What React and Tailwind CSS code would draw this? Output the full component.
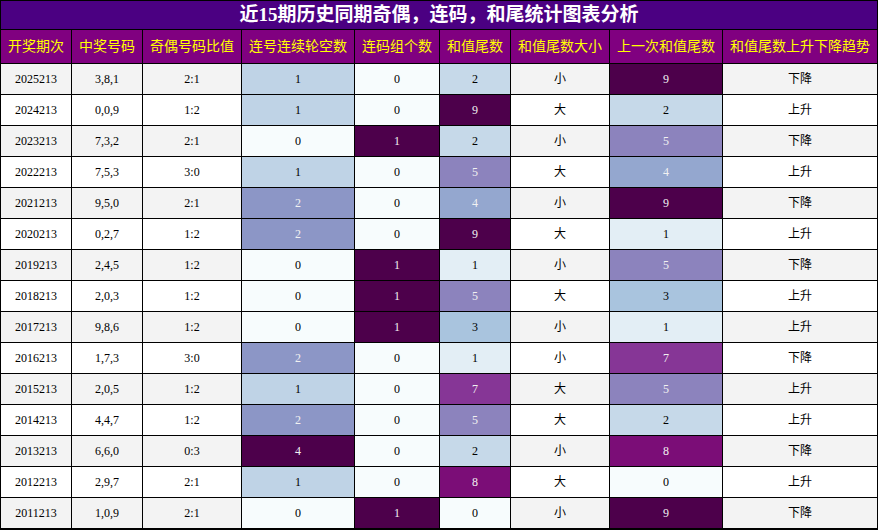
import React from 'react';

const rows = [
  ['2025213', '3,8,1', '2:1', 1, 0, 2, '小', 9, '下降'],
  ['2024213', '0,0,9', '1:2', 1, 0, 9, '大', 2, '上升'],
  ['2023213', '7,3,2', '2:1', 0, 1, 2, '小', 5, '下降'],
  ['2022213', '7,5,3', '3:0', 1, 0, 5, '大', 4, '上升'],
  ['2021213', '9,5,0', '2:1', 2, 0, 4, '小', 9, '下降'],
  ['2020213', '0,2,7', '1:2', 2, 0, 9, '大', 1, '上升'],
  ['2019213', '2,4,5', '1:2', 0, 1, 1, '小', 5, '下降'],
  ['2018213', '2,0,3', '1:2', 0, 1, 5, '大', 3, '上升'],
  ['2017213', '9,8,6', '1:2', 0, 1, 3, '小', 1, '上升'],
  ['2016213', '1,7,3', '3:0', 2, 0, 1, '小', 7, '下降'],
  ['2015213', '2,0,5', '1:2', 1, 0, 7, '大', 5, '上升'],
  ['2014213', '4,4,7', '1:2', 2, 0, 5, '大', 2, '上升'],
  ['2013213', '6,6,0', '0:3', 4, 0, 2, '小', 8, '下降'],
  ['2012213', '2,9,7', '2:1', 1, 0, 8, '大', 0, '上升'],
  ['2011213', '1,0,9', '2:1', 0, 1, 0, '小', 9, '下降'],
];

const headers = ['开奖期次', '中奖号码', '奇偶号码比值', '连号连续轮空数', '连码组个数', '和值尾数', '和值尾数大小', '上一次和值尾数', '和值尾数上升下降趋势'];

// BuPu, 0..9 range
const tail = {
  0: 'bg-[#f7fcfd] text-black',
  1: 'bg-[#e3eef5] text-black',
  2: 'bg-[#c6d9e9] text-black',
  3: 'bg-[#a9c4de] text-black',
  4: 'bg-[#94a7cf] text-[#f1f1f1]',
  5: 'bg-[#8c83bd] text-[#f1f1f1]',
  6: 'bg-[#8b5daa] text-[#f1f1f1]',
  7: 'bg-[#863696] text-[#f1f1f1]',
  8: 'bg-[#7b0d77] text-[#f1f1f1]',
  9: 'bg-[#4d004b] text-[#f1f1f1]',
};

// BuPu, 0..4 range
const gap = {
  0: 'bg-[#f7fcfd] text-black',
  1: 'bg-[#bfd3e6] text-black',
  2: 'bg-[#8c96c6] text-[#f1f1f1]',
  4: 'bg-[#4d004b] text-[#f1f1f1]',
};

// BuPu, 0..1 range
const group = {
  0: 'bg-[#f7fcfd] text-black',
  1: 'bg-[#4d004b] text-[#f1f1f1]',
};

const Cell = ({ className, children }) => (
  <div className={`h-[30px] flex items-center justify-center text-[12px] ${className}`}>{children}</div>
);

export default function App() {
  return (
    <div className="w-[878px] h-[530px] bg-black p-px font-['Liberation_Serif','Noto_Sans_CJK_SC',serif]">
      <div className="grid grid-cols-[70px_70px_98px_112px_84px_70px_98px_112px_154px] gap-px">
        <div className="col-span-9 h-[28px] bg-[#4b0082] text-white font-bold text-[19px] flex items-center justify-center">
          近15期历史同期奇偶，连码，和尾统计图表分析
        </div>
        {headers.map((h) => (
          <div key={h} className="h-[33px] bg-[#800080] text-[#ffff00] text-[14px] flex items-center justify-center whitespace-nowrap">
            {h}
          </div>
        ))}
        {rows.map((r, i) => {
          const plain = i % 2 === 0 ? 'bg-[#f3f3f3] text-black' : 'bg-white text-black';
          return (
            <React.Fragment key={r[0]}>
              <Cell className={plain}>{r[0]}</Cell>
              <Cell className={plain}>{r[1]}</Cell>
              <Cell className={plain}>{r[2]}</Cell>
              <Cell className={gap[r[3]]}>{r[3]}</Cell>
              <Cell className={group[r[4]]}>{r[4]}</Cell>
              <Cell className={tail[r[5]]}>{r[5]}</Cell>
              <Cell className={plain}>{r[6]}</Cell>
              <Cell className={tail[r[7]]}>{r[7]}</Cell>
              <Cell className={plain}>{r[8]}</Cell>
            </React.Fragment>
          );
        })}
      </div>
    </div>
  );
}
